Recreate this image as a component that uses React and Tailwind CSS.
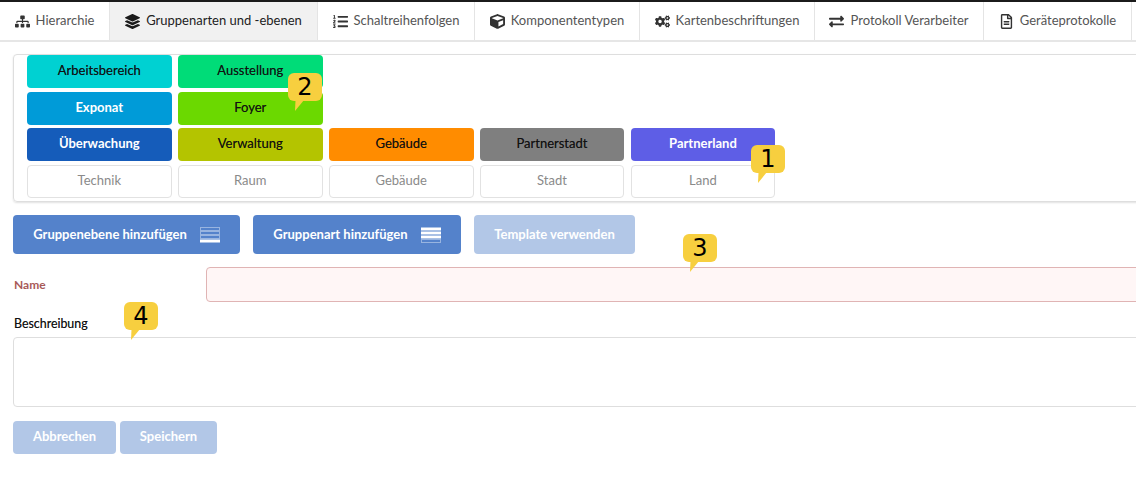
import { FaSitemap, FaLayerGroup, FaListOl, FaCube, FaCogs, FaExchangeAlt, FaRegFileAlt } from 'react-icons/fa';

const tabs = [
  { label: 'Hierarchie', icon: FaSitemap, width: 'w-[110px]' },
  { label: 'Gruppenarten und -ebenen', icon: FaLayerGroup, width: 'w-[208px]', active: true },
  { label: 'Schaltreihenfolgen', icon: FaListOl, width: 'w-[157px]' },
  { label: 'Komponententypen', icon: FaCube, width: 'w-[165px]' },
  { label: 'Kartenbeschriftungen', icon: FaCogs, width: 'w-[175px]' },
  { label: 'Protokoll Verarbeiter', icon: FaExchangeAlt, width: 'w-[169px]' },
  { label: 'Geräteprotokolle', icon: FaRegFileAlt, width: 'w-[148px]' },
];

const darkText = "text-[#111111] text-[13.4px] [text-shadow:0_0_0.5px_rgba(0,0,0,0.5)]";

function Tile({ label, className }) {
  return (
    <div className={`w-[144.6px] h-[33px] pb-[1px] rounded-[4px] flex items-center justify-center text-[13px] ${className}`}>
      {label}
    </div>
  );
}

function StackIcon({ solid }) {
  return (
    <svg width="20" height="16" viewBox="0 0 20 16" className="ml-[13px]">
      {[0, 1, 2, 3].map((i) =>
        solid.includes(i) ? (
          <rect key={i} x="0" y={i * 4 + 0.5} width="20" height="3" fill="#ffffff" />
        ) : (
          <rect
            key={i}
            x="0.5"
            y={i * 4 + 0.5}
            width="19"
            height="3"
            fill="none"
            stroke="#ffffff"
            strokeOpacity="0.4"
            strokeWidth="1"
          />
        )
      )}
    </svg>
  );
}

function Callout({ number, className }) {
  return (
    <div className={`absolute w-[34px] h-[28px] rounded-[6px] bg-[#f7cf3f] flex items-center justify-center text-[24px] leading-none text-black font-['DejaVu_Sans',sans-serif] ${className}`}>
      {number}
      <svg width="12" height="12" viewBox="0 0 12 12" className="absolute left-[6px] top-[27px]">
        <path d="M1 11 L1.5 0 L10 0 Z" fill="#f7cf3f" />
      </svg>
    </div>
  );
}

export default function App() {
  return (
    <div className="relative w-[1136px] h-[481px] overflow-hidden bg-white font-['Lato',sans-serif]">
      <div className="h-[42px] border-t-[2px] border-[#1b1b1b] border-b-[2px] border-b-[#e6e6e6] flex">
        {tabs.map((tab) => {
          const Icon = tab.icon;
          return (
            <div
              key={tab.label}
              className={`${tab.width} shrink-0 flex items-center justify-center gap-[6px] border-r border-[#e4e4e4] text-[13px] ${tab.active ? 'bg-[#f1f1f1] text-[#222222]' : 'text-[#555555]'}`}
            >
              <Icon className={tab.active ? 'text-[15px] text-[#1b1b1b]' : 'text-[15px] text-[#333333]'} />
              <span>{tab.label}</span>
            </div>
          );
        })}
      </div>

      <div className="ml-[13px] mr-[-10px] mt-[12px] h-[148px] pl-[13px] border border-[#dedede] rounded-[4px] shadow-[0_1px_2px_rgba(0,0,0,0.12)] flex flex-col gap-[3px]">
        <div className="flex gap-[6.4px] mb-[1px]">
          <Tile label="Arbeitsbereich" className={`bg-[#00d1d2] ${darkText}`} />
          <Tile label="Ausstellung" className={`bg-[#00dc78] ${darkText}`} />
        </div>
        <div className="flex gap-[6.4px]">
          <Tile label="Exponat" className="bg-[#009bd8] text-white font-bold" />
          <Tile label="Foyer" className={`bg-[#6bd900] ${darkText}`} />
        </div>
        <div className="flex gap-[6.4px] mb-[1px]">
          <Tile label="Überwachung" className="bg-[#155cba] text-white font-bold" />
          <Tile label="Verwaltung" className={`bg-[#b4c400] ${darkText}`} />
          <Tile label="Gebäude" className={`bg-[#ff8c00] ${darkText}`} />
          <Tile label="Partnerstadt" className={`!w-[144px] mr-[0.6px] bg-[#7f7f7f] ${darkText}`} />
          <Tile label="Partnerland" className="!w-[144px] bg-[#5e5ee6] text-white font-bold" />
        </div>
        <div className="flex gap-[6.4px]">
          <Tile label="Technik" className="border border-[#e2e2e2] text-[#8a8a8a]" />
          <Tile label="Raum" className="border border-[#e2e2e2] text-[#8a8a8a]" />
          <Tile label="Gebäude" className="border border-[#e2e2e2] text-[#8a8a8a]" />
          <Tile label="Stadt" className="!w-[144px] mr-[0.6px] border border-[#e2e2e2] text-[#8a8a8a]" />
          <Tile label="Land" className="!w-[144px] border border-[#e2e2e2] text-[#8a8a8a]" />
        </div>
      </div>

      <div className="ml-[13px] mt-[13px] flex gap-[13px]">
        <button className="w-[227px] h-[39px] rounded-[4px] bg-[#5482cb] text-white text-[13px] font-bold flex items-center justify-center">
          Gruppenebene hinzufügen
          <StackIcon solid={[3]} />
        </button>
        <button className="w-[208px] h-[39px] rounded-[4px] bg-[#5482cb] text-white text-[13px] font-bold flex items-center justify-center">
          Gruppenart hinzufügen
          <StackIcon solid={[0, 1, 2]} />
        </button>
        <button className="w-[161px] h-[39px] rounded-[4px] bg-[#b2c7e7] text-white text-[13px] font-bold flex items-center justify-center">
          Template verwenden
        </button>
      </div>

      <div className="ml-[13px] mr-[-10px] mt-[13px] flex items-center">
        <label className="w-[193px] shrink-0 pl-[1px] text-[12px] font-bold text-[#a85a58]">Name</label>
        <div className="grow h-[35px] rounded-[4px] border border-[#e0b4b4] bg-[#fff6f6]" />
      </div>

      <div className="ml-[13px] mr-[-10px] mt-[14px]">
        <div className="pl-[1px] text-[12.4px] text-[#111111] leading-[15px] [text-shadow:0_0_0.5px_rgba(0,0,0,0.5)]">Beschreibung</div>
        <div className="mt-[6px] h-[70px] rounded-[4px] border border-[#dedede]" />
      </div>

      <div className="ml-[13px] mt-[14px] flex gap-[4px]">
        <button className="w-[103px] h-[33px] pb-[1px] rounded-[4px] bg-[#b2c7e7] text-white text-[13px] font-bold">Abbrechen</button>
        <button className="w-[97px] h-[33px] pb-[1px] rounded-[4px] bg-[#b2c7e7] text-white text-[13px] font-bold">Speichern</button>
      </div>

      <Callout number="1" className="left-[751px] top-[145px]" />
      <Callout number="2" className="left-[288px] top-[73px]" />
      <Callout number="3" className="left-[683px] top-[234px]" />
      <Callout number="4" className="left-[124px] top-[302px]" />
    </div>
  );
}
